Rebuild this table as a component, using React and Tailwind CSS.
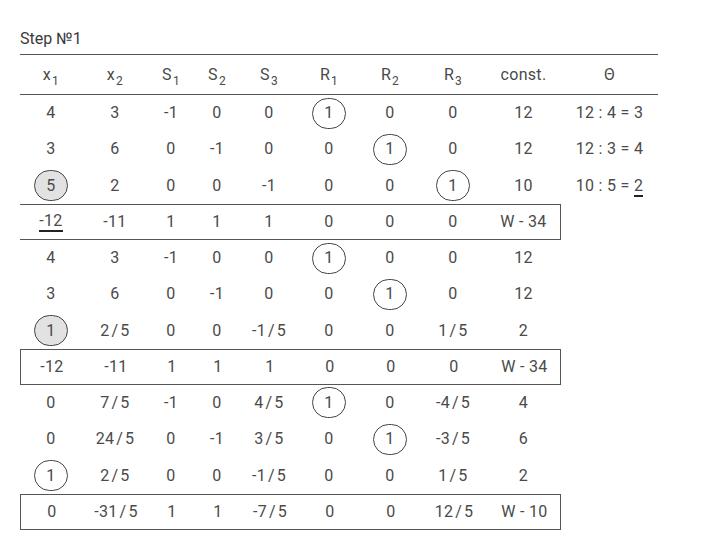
import React from 'react';

const cols = 'grid grid-cols-[62px_66px_46px_46px_58px_62px_60px_66px_75px]';

const Sub = ({ base, sub }) => (
    <span>
        {base}
        <sub className="text-[12px] relative top-[5px] ml-[1px]">{sub}</sub>
    </span>
);

const header = [
    <Sub base="x" sub="1" />, <Sub base="x" sub="2" />,
    <Sub base="S" sub="1" />, <Sub base="S" sub="2" />, <Sub base="S" sub="3" />,
    <Sub base="R" sub="1" />, <Sub base="R" sub="2" />, <Sub base="R" sub="3" />,
    'const.',
];

// c: circled, g: grey pivot circle, u: underlined
const rows = [
    { cells: ['4', '3', '-1', '0', '0', 'c1', '0', '0', '12'], theta: '12 : 4 = 3' },
    { cells: ['3', '6', '0', '-1', '0', '0', 'c1', '0', '12'], theta: '12 : 3 = 4' },
    { cells: ['g5', '2', '0', '0', '-1', '0', '0', 'c1', '10'], theta: 'last' },
    { box: 'open', cells: ['u-12', '-11', '1', '1', '1', '0', '0', '0', 'W - 34'] },
    { cells: ['4', '3', '-1', '0', '0', 'c1', '0', '0', '12'] },
    { cells: ['3', '6', '0', '-1', '0', '0', 'c1', '0', '12'] },
    { cells: ['g1', '2/5', '0', '0', '-1/5', '0', '0', '1/5', '2'] },
    { box: 'full', cells: ['-12', '-11', '1', '1', '1', '0', '0', '0', 'W - 34'] },
    { cells: ['0', '7/5', '-1', '0', '4/5', 'c1', '0', '-4/5', '4'] },
    { cells: ['0', '24/5', '0', '-1', '3/5', '0', 'c1', '-3/5', '6'] },
    { cells: ['c1', '2/5', '0', '0', '-1/5', '0', '0', '1/5', '2'] },
    { box: 'full', cells: ['0', '-31/5', '1', '1', '-7/5', '0', '0', '12/5', 'W - 10'] },
];

const Cell = ({ v }) => {
    if (v.startsWith('c') || v.startsWith('g')) {
        const grey = v.startsWith('g');
        return (
            <span className={`w-[34px] h-[31px] rounded-full border border-[#444] flex items-center justify-center ${grey ? 'bg-[#e2e2e2]' : ''}`}>
                {v.slice(1)}
            </span>
        );
    }
    if (v.startsWith('u')) {
        return <span className="border-b-2 border-[#222] leading-[18px]">{v.slice(1)}</span>;
    }
    return <span>{v.replace('/', '\u200A/\u200A')}</span>;
};

export default function App() {
    return (
        <div className="w-[720px] h-[546px] bg-white pt-[29px] pl-[20px] text-[#4a4a4a] text-[16px] tracking-[0.3px]" style={{ fontFamily: 'Roboto, "Liberation Sans", sans-serif' }}>
            <div className="text-[16px] leading-[20px] h-[25px] text-[#3a3a3a] tracking-normal">Step №1</div>
            <div className="w-[638px] border-t border-b border-[#555] flex h-[41px]">
                <div className={`${cols} items-center`}>
                    {header.map((h, i) => (
                        <div key={i} className="flex justify-center">{h}</div>
                    ))}
                </div>
                <div className="w-[97px] flex justify-center items-center">Θ</div>
            </div>
            {rows.map((r, i) => {
                const boxCls = r.box === 'full'
                    ? 'border border-[#555]'
                    : r.box === 'open'
                        ? 'border-y border-r border-[#555]'
                        : '';
                return (
                    <div key={i} className="flex">
                        <div className={`${cols} items-center ${r.box ? 'h-[36px] w-[541px]' : 'h-[36.3px]'} ${boxCls}`}>
                            {r.cells.map((c, j) => (
                                <div key={j} className="flex justify-center items-center">
                                    <Cell v={c} />
                                </div>
                            ))}
                        </div>
                        <div className="w-[97px] flex justify-center items-center">
                            {r.theta === 'last' ? (
                                <span>10 : 5 = <span className="border-b-2 border-[#222] leading-[18px]">2</span></span>
                            ) : r.theta}
                        </div>
                    </div>
                );
            })}
        </div>
    );
}
